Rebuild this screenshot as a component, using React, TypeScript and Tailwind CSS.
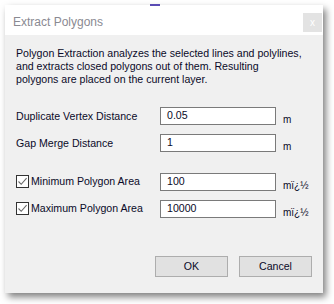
import React from "react";

type Row = {
  label: string;
  value: string;
  unit: string;
  checkbox?: boolean;
};

const rows1: Row[] = [
  { label: "Duplicate Vertex Distance", value: "0.05", unit: "m" },
  { label: "Gap Merge Distance", value: "1", unit: "m" },
];

const rows2: Row[] = [
  { label: "Minimum Polygon Area", value: "100", unit: "mï¿½", checkbox: true },
  { label: "Maximum Polygon Area", value: "10000", unit: "mï¿½", checkbox: true },
];

const CheckBox = () => (
  <span className="w-[13px] h-[13px] border border-[#333333] bg-white flex items-center justify-center mr-[2px] shrink-0">
    <svg width="11" height="11" viewBox="0 0 11 11">
      <path d="M1.5 5.5 L4.2 8.3 L9.6 2.2" fill="none" stroke="#6a6a6a" strokeWidth="1.1" />
    </svg>
  </span>
);

const FieldRow = ({ row }: { row: Row }) => (
  <div className="flex items-center h-[18px]">
    <div className={`w-[144px] flex items-center ${row.checkbox ? "" : "pt-[2px]"}`}>
      {row.checkbox && <CheckBox />}
      <span>{row.label}</span>
    </div>
    <div className="w-[116px] h-[18px] border border-[#7a7a7a] bg-white flex items-center pl-[6px]">
      {row.value}
    </div>
    <span className="ml-[7px] pt-[6px] text-[10px]">{row.unit}</span>
  </div>
);

const App = () => {
  return (
    <div
      className="w-[334px] h-[304px] bg-white relative overflow-hidden text-[10.6px] text-[#0a0a28]"
      style={{ fontFamily: '"Liberation Sans", Arial, sans-serif' }}
    >
      <div className="absolute top-[4px] left-[150px] w-[10px] h-[2px] bg-[#5a4cb4]" />
      <div className="ml-[5px] mt-[5px] w-[318px] h-[288px] bg-[#f0f0f0] shadow-[3px_4px_7px_rgba(0,0,0,0.5)] flex flex-col">
        {/* title bar */}
        <div className="h-[30px] bg-white flex justify-between shrink-0">
          <span className="pl-[8px] pt-[8px] text-[12px] text-[#8a8a92]">Extract Polygons</span>
          <div className="mt-[8px] mr-[1px] w-[19px] h-[19px] bg-[#e3e3e3] flex items-center justify-center text-white text-[10px] leading-none">
            x
          </div>
        </div>

        <div className="pl-[11px] pt-[12px] leading-[13px]">
          <p>
            Polygon Extraction analyzes the selected lines and polylines,
            <br />
            and extracts closed polygons out of them. Resulting
            <br />
            polygons are placed on the current layer.
          </p>
        </div>

        <div className="pl-[11px] mt-[21px] flex flex-col gap-[9px]">
          {rows1.map((r) => (
            <FieldRow key={r.label} row={r} />
          ))}
        </div>

        <div className="pl-[11px] mt-[21px] flex flex-col gap-[9px]">
          {rows2.map((r) => (
            <FieldRow key={r.label} row={r} />
          ))}
        </div>

        <div className="flex justify-end gap-[11px] pr-[11px] mt-[38px]">
          <button className="w-[73px] h-[21px] bg-[#e1e1e1] border border-[#adadad] text-[#0a0a28]">OK</button>
          <button className="w-[73px] h-[21px] bg-[#e1e1e1] border border-[#adadad] text-[#0a0a28]">Cancel</button>
        </div>
      </div>
    </div>
  );
};

export default App;
